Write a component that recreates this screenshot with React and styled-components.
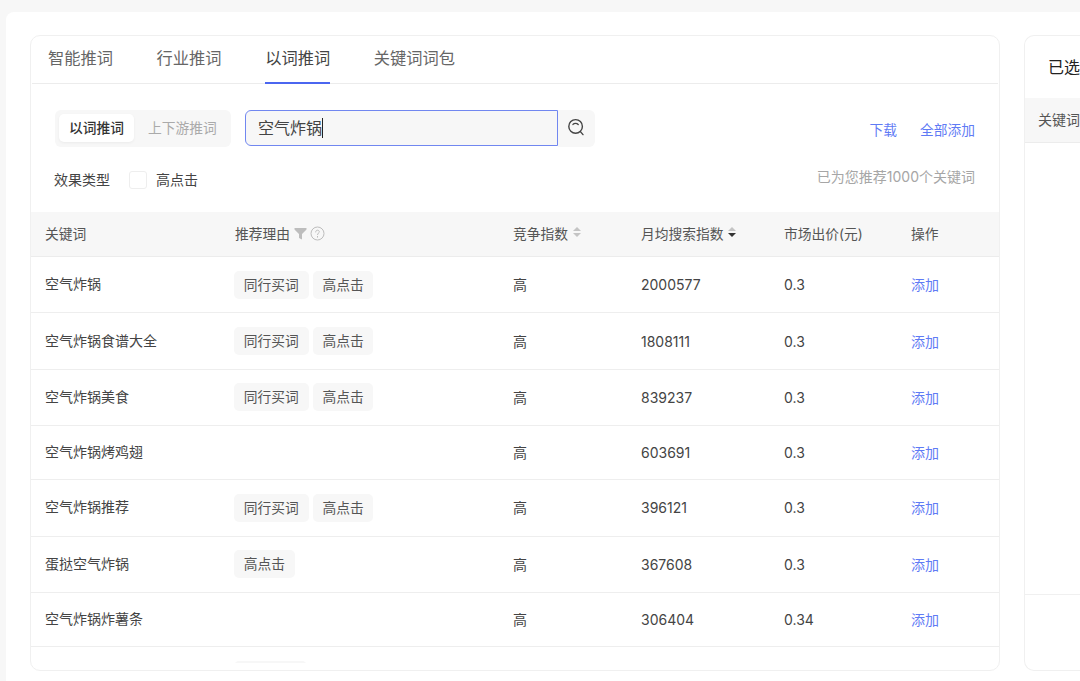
import React from "react";
import styled, { createGlobalStyle } from "styled-components";

const rows = [
  { word: "空气炸锅", tags: ["同行买词", "高点击"], level: "高", search: "2000577", price: "0.3" },
  { word: "空气炸锅食谱大全", tags: ["同行买词", "高点击"], level: "高", search: "1808111", price: "0.3" },
  { word: "空气炸锅美食", tags: ["同行买词", "高点击"], level: "高", search: "839237", price: "0.3" },
  { word: "空气炸锅烤鸡翅", tags: [], level: "高", search: "603691", price: "0.3" },
  { word: "空气炸锅推荐", tags: ["同行买词", "高点击"], level: "高", search: "396121", price: "0.3" },
  { word: "蛋挞空气炸锅", tags: ["高点击"], level: "高", search: "367608", price: "0.3" },
  { word: "空气炸锅炸薯条", tags: [], level: "高", search: "306404", price: "0.34" },
];

const tabs = ["智能推词", "行业推词", "以词推词", "关键词词包"];

const SearchIcon = () => (
  <svg width="18" height="18" viewBox="0 0 18 18" fill="none" stroke="#444" strokeWidth="1.4" strokeLinecap="round">
    <circle cx="8.6" cy="8.4" r="6.8" />
    <path d="M6 6.4c1.2-1.4 3.8-1.4 5.2 0" />
    <path d="M13.4 13.6l2.6 3" />
  </svg>
);

const FilterIcon = () => (
  <HeadGlyph width="13" height="13" viewBox="0 0 13 13" fill="#bdbdbd">
    <path d="M0.5 1h12v1.6L8 7v5.5L5 11V7L0.5 2.6z" />
  </HeadGlyph>
);

const HelpIcon = () => (
  <HeadGlyph width="15" height="15" viewBox="0 0 15 15" fill="none" stroke="#bdbdbd" strokeWidth="1">
    <circle cx="7.5" cy="7.5" r="6.5" />
    <path d="M5.7 6c0-1.2.8-1.8 1.8-1.8s1.8.7 1.8 1.6c0 1.3-1.8 1.4-1.8 2.8" strokeLinecap="round" />
    <path d="M7.5 10.4v.8" strokeLinecap="round" />
  </HeadGlyph>
);

const SortIcon = ({ active }) => (
  <SortGlyph width="10" height="12" viewBox="0 0 10 12">
    <path d="M5 1l4 4H1z" fill="#c4c4c4" />
    <path d="M5 11L1 7h8z" fill={active ? "#333" : "#c4c4c4"} />
  </SortGlyph>
);

const App = () => {
  return (
    <Page>
      <GlobalStyle />
      <Sheet>
        <MainCard>
          <TabBar>
            {tabs.map((t) => (
              <Tab key={t} $active={t === "以词推词"}>{t}</Tab>
            ))}
          </TabBar>
          <Toolbar>
            <ToolRow>
              <Segment>
                <SegmentItem $active>以词推词</SegmentItem>
                <SegmentItem>上下游推词</SegmentItem>
              </Segment>
              <SearchField>
                空气炸锅
                <Caret />
              </SearchField>
              <SearchButton>
                <SearchIcon />
              </SearchButton>
              <Actions>
                <LinkText>下载</LinkText>
                <LinkText>全部添加</LinkText>
              </Actions>
            </ToolRow>
            <FilterRow>
              <FilterLabel>效果类型</FilterLabel>
              <CheckBox />
              <CheckLabel>高点击</CheckLabel>
              <Hint>已为您推荐1000个关键词</Hint>
            </FilterRow>
          </Toolbar>
          <Table>
            <HeadRow>
              <HeadCell>关键词</HeadCell>
              <HeadCell>
                推荐理由
                <FilterIcon />
                <HelpIcon />
              </HeadCell>
              <HeadCell>
                竞争指数
                <SortIcon />
              </HeadCell>
              <HeadCell>
                月均搜索指数
                <SortIcon active />
              </HeadCell>
              <HeadCell>市场出价(元)</HeadCell>
              <HeadCell>操作</HeadCell>
            </HeadRow>
            {rows.map((r) => (
              <Row key={r.word} $tagged={r.tags.length > 0}>
                <WordCell>{r.word}</WordCell>
                <TagList>
                  {r.tags.map((t) => (
                    <Tag key={t}>{t}</Tag>
                  ))}
                </TagList>
                <LevelCell>{r.level}</LevelCell>
                <Cell>{r.search}</Cell>
                <Cell>{r.price}</Cell>
                <RowLink>添加</RowLink>
              </Row>
            ))}
            <Row $tagged>
              <span />
              <TagList>
                <TagStub />
              </TagList>
            </Row>
          </Table>
        </MainCard>
        <SideCard>
          <SideTitle>已选</SideTitle>
          <SideHead>关键词</SideHead>
          <SideBody />
          <SideFooter />
        </SideCard>
      </Sheet>
    </Page>
  );
};

const GlobalStyle = createGlobalStyle`
  html, body {
    margin: 0;
    height: 100%;
    overflow: hidden;
    background: #f7f7f7;
  }
  body {
    font-family: "Inter", "Noto Sans CJK SC", sans-serif;
    font-size: 14px;
    color: #333;
  }
`;

const Page = styled.div`
  width: 1080px;
  height: 681px;
  padding: 12px 0 0 6px;
  box-sizing: border-box;
  overflow: hidden;
`;
const Sheet = styled.div`
  width: 1074px;
  height: 669px;
  background: #fff;
  border-radius: 8px 0 0 0;
  padding: 23px 0 10px 24px;
  box-sizing: border-box;
  display: flex;
  gap: 24px;
`;
const MainCard = styled.div`
  flex: 0 0 970px;
  border: 1px solid #f0f0f0;
  border-radius: 10px;
  box-sizing: border-box;
  padding-bottom: 7px;
  display: flex;
  flex-direction: column;
`;
const TabBar = styled.div`
  height: 48px;
  box-sizing: border-box;
  margin: 0 1px;
  padding-left: 16px;
  border-bottom: 1px solid #ececec;
  display: flex;
  gap: 43.6px;
`;
const Tab = styled.div`
  height: 48px;
  box-sizing: border-box;
  padding-top: 10px;
  line-height: 24px;
  font-size: 16.25px;
  color: ${(p) => (p.$active ? "#444" : "#666")};
  border-bottom: 2px solid ${(p) => (p.$active ? "#4b66f0" : "transparent")};
`;
const Toolbar = styled.div`
  padding: 26px 24px 0 24px;
  height: 128px;
  box-sizing: border-box;
`;
const ToolRow = styled.div`
  display: flex;
  align-items: flex-start;
`;
const Segment = styled.div`
  width: 176px;
  height: 37px;
  box-sizing: border-box;
  padding: 4px;
  background: #f7f7f7;
  border-radius: 6px;
  display: flex;
  gap: 4px;
  margin-right: 14px;
  font-size: 13.75px;
  white-space: nowrap;
`;
const SegmentItem = styled.div`
  height: 28px;
  line-height: 28px;
  padding: 0 10px;
  border-radius: 5px;
  font-weight: ${(p) => (p.$active ? 500 : 400)};
  color: ${(p) => (p.$active ? "#333" : "#aaa")};
  background: ${(p) => (p.$active ? "#fff" : "transparent")};
  box-shadow: ${(p) => (p.$active ? "0 1px 3px rgba(0,0,0,0.05)" : "none")};
`;
const SearchField = styled.div`
  width: 313px;
  height: 36px;
  box-sizing: border-box;
  padding-left: 12px;
  border: 1px solid #7187f0;
  border-radius: 6px 0 0 6px;
  background: #f7f7f7;
  font-size: 16px;
  line-height: 36px;
  color: #444;
  display: flex;
  align-items: center;
`;
const Caret = styled.span`
  width: 1px;
  height: 20px;
  background: #222;
`;
const SearchButton = styled.div`
  width: 37px;
  height: 37px;
  padding: 0 2px 4px 0;
  box-sizing: border-box;
  background: #f7f7f7;
  border-radius: 0 6px 6px 0;
  display: flex;
  align-items: center;
  justify-content: center;
`;
const Actions = styled.div`
  margin-left: auto;
  display: flex;
  gap: 23px;
  padding-top: 9px;
  line-height: 22px;
  font-size: 13.75px;
`;
const LinkText = styled.span`
  color: #5f7bf5;
`;
const RowLink = styled(LinkText)`
  margin-top: -1px;
`;
const FilterRow = styled.div`
  margin-top: 22px;
  height: 22px;
  display: flex;
  align-items: center;
  line-height: 22px;
  color: #444;
`;
const FilterLabel = styled.span`
  margin: 0 19px 0 -1px;
`;
const CheckBox = styled.span`
  width: 18px;
  height: 18px;
  border: 1px solid #eee;
  border-radius: 3px;
  box-sizing: border-box;
  margin-right: 9px;
`;
const CheckLabel = styled.span`
  color: #444;
`;
const Hint = styled.span`
  margin-left: auto;
  margin-top: -6px;
  color: #a6a6a6;
`;
const Table = styled.div`
  flex: 1;
  min-height: 0;
  overflow: hidden;
`;
const columns = "190px 278px 128px 143px 127px 1fr";
const HeadRow = styled.div`
  display: grid;
  grid-template-columns: ${columns};
  align-items: center;
  height: 45px;
  box-sizing: border-box;
  padding: 0 0 3px 14px;
  background: #f7f7f7;
  border-bottom: 1px solid #ececec;
`;
const HeadCell = styled.div`
  display: flex;
  align-items: center;
  gap: 3.5px;
  color: #555;
  font-size: 13.75px;
  white-space: nowrap;
`;
const HeadGlyph = styled.svg`
  margin-top: 2px;
`;
const SortGlyph = styled.svg`
  margin-top: -1px;
`;
const Row = styled.div`
  display: grid;
  grid-template-columns: ${columns};
  align-items: center;
  height: ${(p) => (p.$tagged ? "56.4px" : "54px")};
  box-sizing: border-box;
  padding-left: 14px;
  border-bottom: 1px solid #eee;
  color: #444;
`;
const WordCell = styled.div`
  margin-top: -3px;
`;
const Cell = styled.div``;
const LevelCell = styled.div`
  margin-top: -1px;
`;
const TagList = styled.div`
  display: flex;
  gap: 4px;
  margin-left: -1px;
`;
const Tag = styled.span`
  height: 28px;
  line-height: 28px;
  padding: 0 9.8px;
  border-radius: 5px;
  background: #f7f7f7;
  color: #555;
  font-size: 13.75px;
`;
const TagStub = styled.span`
  width: 73px;
  height: 28px;
  border-radius: 5px;
  background: #f7f7f7;
`;
const SideCard = styled.div`
  flex: 1;
  border: 1px solid #f0f0f0;
  border-right: none;
  border-radius: 10px 0 0 10px;
  display: flex;
  flex-direction: column;
`;
const SideTitle = styled.div`
  height: 62px;
  box-sizing: border-box;
  padding: 19px 0 0 23px;
  font-size: 16px;
  line-height: 24px;
  color: #222;
  white-space: nowrap;
`;
const SideHead = styled.div`
  height: 45px;
  box-sizing: border-box;
  padding-left: 13px;
  line-height: 44px;
  background: #f7f7f7;
  border-bottom: 1px solid #ececec;
  color: #555;
  white-space: nowrap;
`;
const SideBody = styled.div`
  flex: 1;
`;
const SideFooter = styled.div`
  height: 75px;
  border-top: 1px solid #f0f0f0;
`;

export default App;
